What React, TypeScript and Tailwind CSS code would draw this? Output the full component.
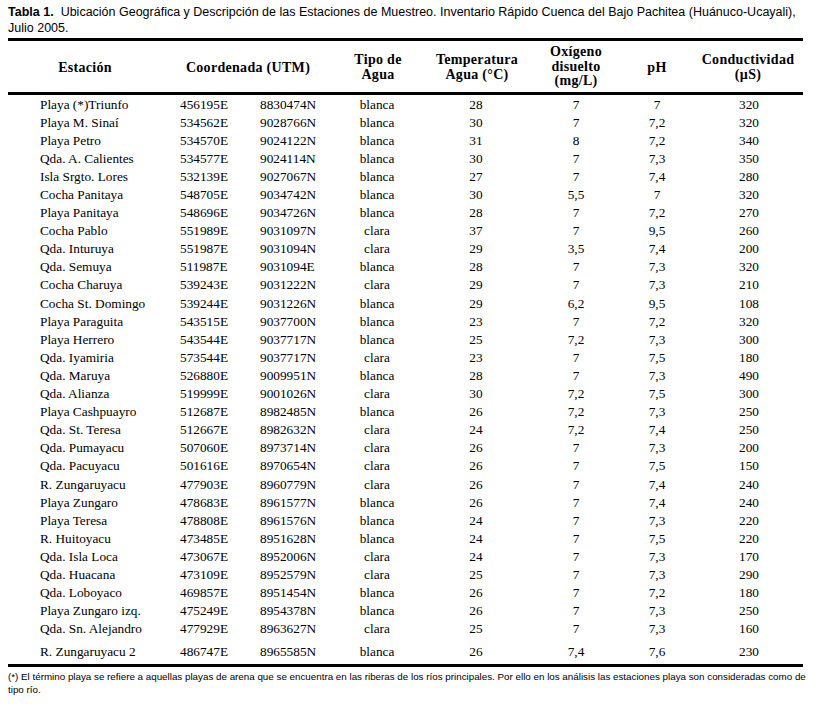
import React from "react";

type Row = [string, string, string, string, string, string, string, string];

const rows: Row[] = [
  ["Playa (*)Triunfo", "456195E", "8830474N", "blanca", "28", "7", "7", "320"],
  ["Playa M. Sinaí", "534562E", "9028766N", "blanca", "30", "7", "7,2", "320"],
  ["Playa Petro", "534570E", "9024122N", "blanca", "31", "8", "7,2", "340"],
  ["Qda. A. Calientes", "534577E", "9024114N", "blanca", "30", "7", "7,3", "350"],
  ["Isla Srgto. Lores", "532139E", "9027067N", "blanca", "27", "7", "7,4", "280"],
  ["Cocha Panitaya", "548705E", "9034742N", "blanca", "30", "5,5", "7", "320"],
  ["Playa Panitaya", "548696E", "9034726N", "blanca", "28", "7", "7,2", "270"],
  ["Cocha Pablo", "551989E", "9031097N", "clara", "37", "7", "9,5", "260"],
  ["Qda. Inturuya", "551987E", "9031094N", "clara", "29", "3,5", "7,4", "200"],
  ["Qda. Semuya", "511987E", "9031094E", "blanca", "28", "7", "7,3", "320"],
  ["Cocha Charuya", "539243E", "9031222N", "clara", "29", "7", "7,3", "210"],
  ["Cocha St. Domingo", "539244E", "9031226N", "blanca", "29", "6,2", "9,5", "108"],
  ["Playa Paraguita", "543515E", "9037700N", "blanca", "23", "7", "7,2", "320"],
  ["Playa Herrero", "543544E", "9037717N", "blanca", "25", "7,2", "7,3", "300"],
  ["Qda. Iyamiria", "573544E", "9037717N", "clara", "23", "7", "7,5", "180"],
  ["Qda. Maruya", "526880E", "9009951N", "blanca", "28", "7", "7,3", "490"],
  ["Qda. Alianza", "519999E", "9001026N", "clara", "30", "7,2", "7,5", "300"],
  ["Playa Cashpuayro", "512687E", "8982485N", "blanca", "26", "7,2", "7,3", "250"],
  ["Qda. St. Teresa", "512667E", "8982632N", "clara", "24", "7,2", "7,4", "250"],
  ["Qda. Pumayacu", "507060E", "8973714N", "clara", "26", "7", "7,3", "200"],
  ["Qda. Pacuyacu", "501616E", "8970654N", "clara", "26", "7", "7,5", "150"],
  ["R. Zungaruyacu", "477903E", "8960779N", "clara", "26", "7", "7,4", "240"],
  ["Playa Zungaro", "478683E", "8961577N", "blanca", "26", "7", "7,4", "240"],
  ["Playa Teresa", "478808E", "8961576N", "blanca", "24", "7", "7,3", "220"],
  ["R. Huitoyacu", "473485E", "8951628N", "blanca", "24", "7", "7,5", "220"],
  ["Qda. Isla Loca", "473067E", "8952006N", "clara", "24", "7", "7,3", "170"],
  ["Qda. Huacana", "473109E", "8952579N", "clara", "25", "7", "7,3", "290"],
  ["Qda. Loboyaco", "469857E", "8951454N", "blanca", "26", "7", "7,2", "180"],
  ["Playa Zungaro izq.", "475249E", "8954378N", "blanca", "26", "7", "7,3", "250"],
  ["Qda. Sn. Alejandro", "477929E", "8963627N", "clara", "25", "7", "7,3", "160"],
];

const lastRow: Row = ["R. Zungaruyacu 2", "486747E", "8965585N", "blanca", "26", "7,4", "7,6", "230"];

const grid = "grid grid-cols-[164px_83px_80px_84px_114px_86px_76px_108px]";

function DataRow({ r, tall }: { r: Row; tall?: boolean }) {
  return (
    <div className={`${grid} items-center ${tall ? "h-[26px] pt-[1px]" : "h-[18.1px]"}`}>
      <div className="pl-[32px] whitespace-nowrap">{r[0]}</div>
      <div className="pl-[8px]">{r[1]}</div>
      <div className="pl-[5px]">{r[2]}</div>
      <div className="text-center">{r[3]}</div>
      <div className="text-center">{r[4]}</div>
      <div className="text-center">{r[5]}</div>
      <div className="text-center">{r[6]}</div>
      <div className="text-center">{r[7]}</div>
    </div>
  );
}

export default function App() {
  const serif = "font-['Liberation_Serif',serif]";
  return (
    <div className="w-[832px] h-[706px] bg-white text-black overflow-hidden">
      <div className="pl-[8px] w-[803px]">
        <div className="font-['Liberation_Sans',Arial,sans-serif] text-[12.5px] leading-[16px] pt-[4px] whitespace-nowrap">
          <span className="font-bold">Tabla 1.</span>
          <span className="ml-[7px]">
            Ubicación Geográfica y Descripción de las Estaciones de Muestreo. Inventario Rápido Cuenca del Bajo Pachitea (Huánuco-Ucayali),
          </span>
          <br />
          <span>Julio 2005.</span>
        </div>
        <div className={`${serif} mt-[2px] border-t-[3px] border-b-[3px] border-black`}>
          <div className={`${grid} h-[51px] items-center font-bold text-[14px] leading-[14.5px] tracking-[0.3px]`}>
            <div className="text-center pr-[10px] pt-[4px]">Estación</div>
            <div className="col-span-2 text-center pr-[11px] pt-[4px]">Coordenada (UTM)</div>
            <div className="text-center pl-[2px] pt-[2px]">
              Tipo de
              <br />
              Agua
            </div>
            <div className="text-center pl-[2px] pt-[2px]">
              Temperatura
              <br />
              Agua (°C)
            </div>
            <div className="text-center pt-[1px]">
              Oxígeno
              <br />
              disuelto
              <br />
              (mg/L)
            </div>
            <div className="text-center pt-[4px]">pH</div>
            <div className="text-center pr-[2px] pt-[2px]">
              Conductividad
              <br />
              (µS)
            </div>
          </div>
        </div>
        <div className={`${serif} text-[13.3px] leading-[15px] border-b-[3px] border-black`}>
          {rows.map((r, i) => (
            <DataRow key={i} r={r} />
          ))}
          <DataRow r={lastRow} tall />
        </div>
        <div className="font-['Liberation_Sans',Arial,sans-serif] text-[9.8px] leading-[13px] pt-[3px] whitespace-nowrap">
          (*) El término playa se refiere a aquellas playas de arena que se encuentra en las riberas de los ríos principales. Por ello en los análisis las estaciones playa son consideradas como de
          <br />
          tipo río.
        </div>
      </div>
    </div>
  );
}
